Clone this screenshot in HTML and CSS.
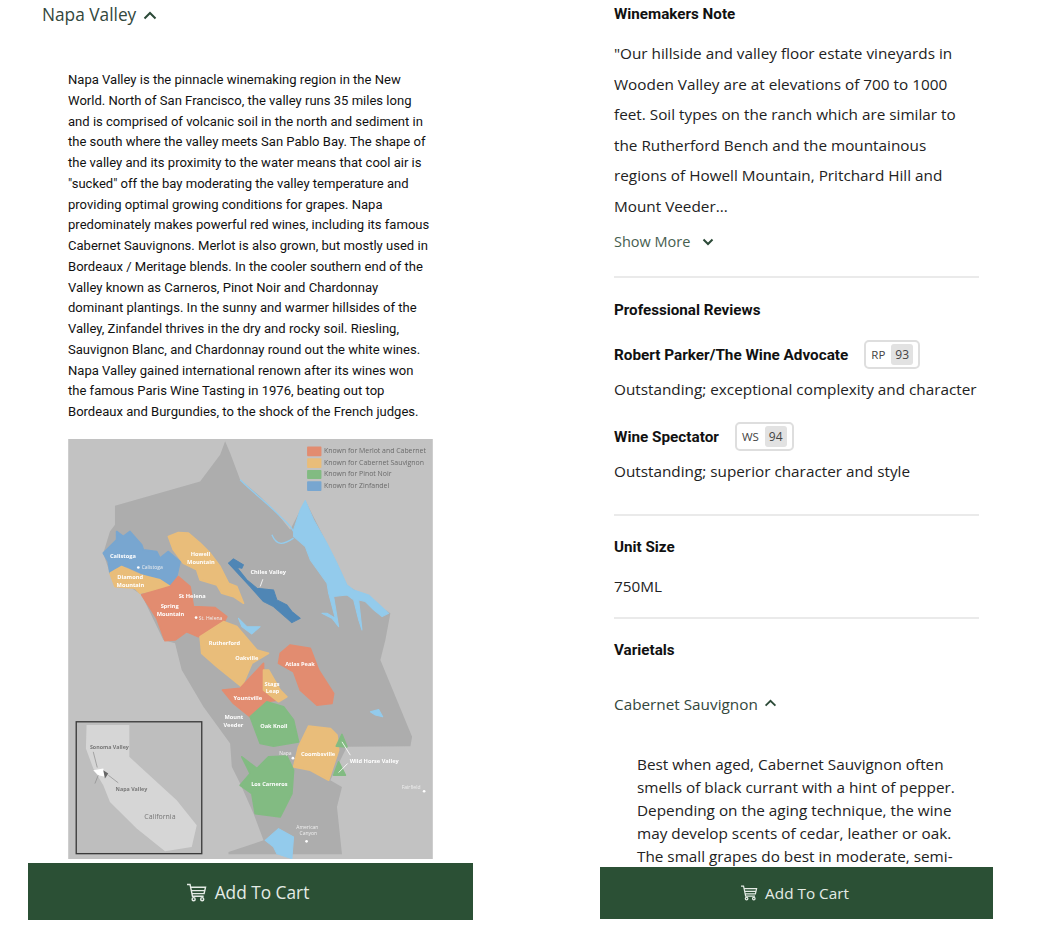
FILE: index.html
```html
<!DOCTYPE html>
<html lang="en">
<head>
<meta charset="utf-8">
<title>Wine details</title>
<link rel="stylesheet" href="styles.css">
</head>
<body>
<main class="page">
  <section class="panel panel-left">
    <h2 class="acc-title">Napa Valley
      <svg class="chev-up" viewBox="0 0 14 9"><path d="M1.500 7.500 7 2l5.500 5.500"/></svg>
    </h2>
    <div class="region">
      <p class="region-text">Napa Valley is the pinnacle winemaking region in the New World. North of San Francisco, the valley runs 35 miles long and is comprised of volcanic soil in the north and sediment in the south where the valley meets San Pablo Bay. The shape of the valley and its proximity to the water means that cool air is "sucked" off the bay moderating the valley temperature and providing optimal growing conditions for grapes. Napa predominately makes powerful red wines, including its famous Cabernet Sauvignons. Merlot is also grown, but mostly used in Bordeaux / Meritage blends. In the cooler southern end of the Valley known as Carneros, Pinot Noir and Chardonnay dominant plantings. In the sunny and warmer hillsides of the Valley, Zinfandel thrives in the dry and rocky soil. Riesling, Sauvignon Blanc, and Chardonnay round out the white wines. Napa Valley gained international renown after its wines won the famous Paris Wine Tasting in 1976, beating out top Bordeaux and Burgundies, to the shock of the French judges.</p>
      <svg class="map" viewBox="25 28 1092 1258" role="img" aria-label="Map of Napa Valley">
        <rect class="m-bg" x="25" y="28" width="1092" height="1258"/>
        <polygon class="m-county" points="495,35 480,75 420,155 165,228 165,285 150,305 130,370 150,430 245,495 310,630 345,640 365,720 430,830 510,940 515,1010 540,1060 580,1150 610,1230 505,1265 505,1272 845,1272 830,1130 845,1070 810,1050 860,950 1050,948 1055,920 960,690 975,630 990,550 860,465 830,400 735,212 690,300 650,250 600,200 540,150 510,70"/>
        <polygon class="m-water" points="735,212 760,270 800,340 830,400 860,465 880,480 925,495 985,550 965,560 940,540 915,515 895,510 905,600 895,570 880,510 860,495 820,500 835,590 815,565 785,550 800,550 825,565 805,490 800,460 750,390 735,350 700,320 700,300 720,240"/>
        <path class="m-river" d="M540 150C580 190 610 210 650 250S690 285 700 305M700 325C670 345 650 350 635 315"/>
        <polygon class="m-blue" points="130,370 170,330 170,305 190,320 210,305 245,345 250,360 290,365 300,385 325,365 360,395 350,440 330,470 280,445 200,410 165,415 150,430 145,395"/>
        <polygon class="m-orange" points="150,430 185,410 240,435 300,450 330,470 290,480 240,490 225,475 165,470"/>
        <polygon class="m-orange" points="325,320 355,308 385,310 420,340 450,370 480,410 505,460 530,470 550,520 520,500 485,490 470,465 420,450 410,420 370,400 340,360"/>
        <polygon class="m-dblue" points="505,400 520,387 550,405 545,415 530,412 560,450 590,475 640,480 650,510 680,525 695,545 720,565 695,578 640,530 610,515 570,470"/>
        <polygon class="m-red" points="245,495 330,470 355,440 390,470 400,530 465,533 500,560 490,580 415,620 380,605 345,630 315,632 290,565"/>
        <polygon class="m-water" points="535,565 560,590 600,590 575,612 545,590"/>
        <polygon class="m-orange" points="420,620 490,575 530,590 590,660 625,670 575,700 545,770 470,710 425,670"/>
        <polygon class="m-red" points="690,645 750,655 775,720 820,790 815,820 770,825 720,780 700,725 655,700 660,670"/>
        <polygon class="m-red" points="487,780 540,775 610,700 610,740 605,780 650,810 620,815 570,860 520,820"/>
        <polygon class="m-orange" points="610,720 625,720 660,780 680,800 655,815 610,780"/>
        <polygon class="m-green" points="570,860 620,815 670,830 700,870 715,935 640,948 600,940"/>
        <polygon class="m-orange" points="745,888 810,895 830,915 835,960 805,1050 750,1020 700,1010 715,950"/>
        <polygon class="m-green" points="845,913 860,950 828,948"/>
        <polygon class="m-green" points="835,995 855,1035 820,1035"/>
        <polygon class="m-green" points="545,980 590,1015 625,980 680,978 700,1020 695,1090 660,1160 585,1150 575,1090 540,1065 570,1030"/>
        <polygon class="m-water" points="930,845 955,838 967,860 945,855"/>
        <polygon class="m-water" points="615,1230 655,1195 700,1220 695,1285 650,1270 640,1250"/>
        <rect class="m-inset" x="49" y="875" width="376" height="395"/>
        <polygon class="m-ca" points="80,885 208,885 208,980 350,1110 410,1185 395,1250 315,1263 230,1195 150,1115 130,1065 100,1015 78,955"/>
        <polygon class="m-white" points="100,1020 130,1015 135,1040 115,1035"/>
        <polygon class="m-dark" points="130,1020 145,1030 135,1045"/>
        <path class="m-line" d="M100 965 112 1012M145 1035 175 1058M115 1035 105 1060"/>
        <path class="m-wline" d="M600 470 608 448M845 935 870 975M835 1027 862 1000"/>
        <rect class="m-red" x="743" y="53" width="38" height="24"/>
        <rect class="m-orange" x="743" y="88" width="38" height="24"/>
        <rect class="m-green" x="743" y="123" width="38" height="22"/>
        <rect class="m-blue" x="743" y="157" width="38" height="24"/>
        <text class="m-legend" x="791" y="70">Known for Merlot and Cabernet</text>
        <text class="m-legend" x="791" y="106">Known for Cabernet Sauvignon</text>
        <text class="m-legend" x="791" y="140">Known for Pinot Noir</text>
        <text class="m-legend" x="791" y="175">Known for Zinfandel</text>
        <text class="m-label" x="150" y="384">Calistoga</text>
        <text class="m-small" x="245" y="418">Calistoga</text>
        <text class="m-label" x="172" y="448">Diamond</text>
        <text class="m-label" x="170" y="471">Mountain</text>
        <text class="m-label" x="392" y="378">Howell</text>
        <text class="m-label" x="381" y="401">Mountain</text>
        <text class="m-label" x="571" y="433">Chiles Valley</text>
        <text class="m-label" x="356" y="505">St Helena</text>
        <text class="m-label" x="302" y="535">Spring</text>
        <text class="m-label" x="290" y="558">Mountain</text>
        <text class="m-small" x="416" y="569">St. Helena</text>
        <text class="m-label" x="446" y="644">Rutherford</text>
        <text class="m-label" x="525" y="689">Oakville</text>
        <text class="m-label" x="675" y="707">Atlas Peak</text>
        <text class="m-label" x="613" y="767">Stags</text>
        <text class="m-label" x="617" y="790">Leap</text>
        <text class="m-label" x="520" y="810">Yountville</text>
        <text class="m-label" x="493" y="868">Mount</text>
        <text class="m-label" x="490" y="891">Veeder</text>
        <text class="m-label" x="600" y="893">Oak Knoll</text>
        <text class="m-small" x="657" y="974">Napa</text>
        <text class="m-label" x="722" y="977">Coombsville</text>
        <text class="m-label" x="868" y="997">Wild Horse Valley</text>
        <text class="m-label" x="573" y="1067">Los Carneros</text>
        <text class="m-small" x="1024" y="1076">Fairfield</text>
        <text class="m-small" x="708" y="1196">American</text>
        <text class="m-small" x="718" y="1215">Canyon</text>
        <text class="m-inlabel" x="90" y="958">Sonoma Valley</text>
        <text class="m-inlabel" x="167" y="1083">Napa Valley</text>
        <text class="m-ca-name" x="253" y="1167">California</text>
        <circle class="m-dot" cx="235" cy="413" r="4"/>
        <circle class="m-dot" cx="408" cy="563" r="4"/>
        <circle class="m-dot" cx="698" cy="984" r="4"/>
        <circle class="m-dot" cx="1091" cy="1083" r="4"/>
        <circle class="m-dot" cx="739" cy="1233" r="4"/>
      </svg>
    </div>
    <button class="cart cart-left" type="button">
      <svg class="cart-icon" viewBox="0 0 22 20"><path d="M1 1.500h3.200l2.600 12.500h11.700M4.800 4.500h15.700l-1.500 6.700H6.200M5.800 8h14"/><circle cx="8" cy="17" r="1.600"/><circle cx="17" cy="17" r="1.600"/></svg>
      Add To Cart
    </button>
  </section>

  <section class="panel panel-right">
    <h3 class="label first">Winemakers Note</h3>
    <p class="note">"Our hillside and valley floor estate vineyards in Wooden Valley are at elevations of 700 to 1000 feet. Soil types on the ranch which are similar to the Rutherford Bench and the mountainous regions of Howell Mountain, Pritchard Hill and Mount Veeder...</p>
    <div class="more">Show More
      <svg class="chev-down" viewBox="0 0 12 8"><path d="M1.500 1.500 6 6l4.500-4.500"/></svg>
    </div>
    <hr class="rule rule-a">
    <h3 class="label">Professional Reviews</h3>
    <div class="review review-a">
      <strong class="reviewer">Robert Parker/The Wine Advocate</strong>
      <span class="badge">RP <b class="score">93</b></span>
    </div>
    <p class="verdict">Outstanding; exceptional complexity and character</p>
    <div class="review review-b">
      <strong class="reviewer">Wine Spectator</strong>
      <span class="badge">WS <b class="score">94</b></span>
    </div>
    <p class="verdict">Outstanding; superior character and style</p>
    <hr class="rule rule-b">
    <h3 class="label">Unit Size</h3>
    <p class="unit">750ML</p>
    <hr class="rule rule-c">
    <h3 class="label">Varietals</h3>
    <div class="varietal">Cabernet Sauvignon
      <svg class="chev-up small" viewBox="0 0 14 9"><path d="M1.500 7.500 7 2l5.500 5.500"/></svg>
    </div>
    <p class="varietal-text">Best when aged, Cabernet Sauvignon often smells of black currant with a hint of pepper. Depending on the aging technique, the wine may develop scents of cedar, leather or oak. The small grapes do best in moderate, semi-</p>
    <button class="cart cart-right" type="button">
      <svg class="cart-icon" viewBox="0 0 22 20"><path d="M1 1.500h3.200l2.600 12.500h11.700M4.800 4.500h15.700l-1.500 6.700H6.200M5.800 8h14"/><circle cx="8" cy="17" r="1.600"/><circle cx="17" cy="17" r="1.600"/></svg>
      Add To Cart
    </button>
  </section>
</main>
</body>
</html>
```
FILE: styles.css
```css
* { box-sizing: border-box; }
html, body { margin: 0; height: 930px; overflow: hidden; background: #fff; }
.page { display: flex; align-items: flex-start; padding-left: 28px; gap: 127px; }
.panel { position: relative; overflow: hidden; flex: none; }
.panel-left { width: 445px; height: 920px; }
.panel-right { width: 393px; height: 919px; padding: 0 14px; }

.acc-title { margin: 0; padding: 3px 0 0 14px; height: 60px; font: 400 17.300px/24px "Open Sans", sans-serif; color: #33473c; display: flex; align-items: flex-start; gap: 7px; }
.chev-up, .chev-down { fill: none; stroke: #2c4a38; stroke-width: 2; }
.chev-up { width: 14px; height: 9px; margin-top: 8px; }
.chev-up.small { width: 13px; height: 8px; margin-top: 7px; }
.chev-down { width: 12px; height: 8px; margin-left: 12px; }

.region { padding: 10px 0 0 40px; width: 405px; }
.region-text { margin: 0 0 16px; width: 365px; font: 400 13.050px/20.750px Roboto, sans-serif; color: #111; }
.map { display: block; width: 365px; height: 420px; filter: blur(.5px); }
.m-bg { fill: #c2c2c2; }
.m-county { fill: #adadad; }
.m-water { fill: #93cbec; stroke: #93cbec; stroke-width: 3; stroke-linejoin: round; }
.m-river { fill: none; stroke: #93cbec; stroke-width: 4; }
.m-blue { fill: #78a6d0; stroke: #78a6d0; stroke-width: 5; stroke-linejoin: round; }
.m-dblue { fill: #4f86b5; stroke: #4f86b5; stroke-width: 3; stroke-linejoin: round; }
.m-orange { fill: #e9bd7a; stroke: #e9bd7a; stroke-width: 5; stroke-linejoin: round; }
.m-red { fill: #e28c70; stroke: #e28c70; stroke-width: 5; stroke-linejoin: round; }
.m-green { fill: #82bb82; stroke: #82bb82; stroke-width: 5; stroke-linejoin: round; }
.m-inset { fill: #bebebe; stroke: #3a3a3a; stroke-width: 4; }
.m-ca { fill: #d6d6d6; }
.m-white { fill: #fff; }
.m-dark { fill: #666; }
.m-line { fill: none; stroke: #8a8a8a; stroke-width: 2; }
.m-wline { fill: none; stroke: #fff; stroke-width: 2.500; }
.m-dot { fill: #fff; }
.m-legend { font: 400 20.700px "Open Sans", sans-serif; fill: #6a6a6a; }
.m-label { font: 700 17px "Open Sans", sans-serif; fill: #fff; }
.m-small { font: 400 15px "Open Sans", sans-serif; fill: #eee; }
.m-inlabel { font: 700 16px "Open Sans", sans-serif; fill: #777; }
.m-ca-name { font: 400 21px "Open Sans", sans-serif; fill: #777; }

.cart { position: absolute; display: flex; align-items: center; justify-content: center; border: 0; background: #2b5035; color: #e4ebe5; font-family: "Open Sans", sans-serif; font-weight: 400; }
.cart-icon { fill: none; stroke: #e4ebe5; stroke-width: 1.500; }
.cart-left { left: 0; right: 0; bottom: 0; height: 57px; gap: 8px; padding: 2px 6px 0 0; font-size: 17.300px; }
.cart-left .cart-icon { width: 21px; height: 19px; }
.cart-right { left: 0; right: 0; bottom: 0; height: 52px; gap: 7px; padding: 0 4px 0 0; font-size: 15.300px; }
.cart-right .cart-icon { width: 18px; height: 16px; }

.label { margin: 0; font: 700 15.200px/20px Roboto, sans-serif; color: #111; }
.first { padding-top: 4px; }
.note { margin: 14px 0 0; font: 400 15.300px/30.600px "Open Sans", sans-serif; color: #222; }
.more { display: flex; align-items: center; margin-top: 9px; font: 400 14.500px/22px "Open Sans", sans-serif; color: #46604f; }
.rule { border: 0; border-top: 2px solid #eaeaea; margin: 0; }
.rule-a { margin: 23px 0 22px; }
.review { display: flex; align-items: center; }
.review-a { margin-top: 19px; height: 32px; }
.review-b { margin-top: 19px; height: 32px; }
.reviewer { font: 700 15.300px/20px Roboto, sans-serif; color: #111; margin-right: 16px; }
.badge { display: flex; align-items: center; gap: 6px; height: 29px; padding: 0 5px; border: 2px solid #dedede; border-radius: 5px; font: 400 11.500px "Open Sans", sans-serif; color: #444; }
.score { display: block; padding: 2px 4px; background: #e2e2e2; border-radius: 3px; font-weight: 400; font-size: 12px; }
.verdict { margin: 5px 0 0; font: 400 15.300px/26px "Open Sans", sans-serif; color: #222; }
.rule-b { margin: 30px 0 21px; }
.unit { margin: 17px 0 0; font: 400 15.300px/24px "Open Sans", sans-serif; color: #222; }
.rule-c { margin: 19px 0 21px; }
.varietal { display: flex; align-items: flex-start; gap: 6px; margin-top: 32px; font: 400 15.300px/24px "Open Sans", sans-serif; color: #33473c; }
.varietal-text { margin: 37px 0 0; padding: 0 22px 0 23px; font: 400 15.300px/23px "Open Sans", sans-serif; color: #222; }
```
